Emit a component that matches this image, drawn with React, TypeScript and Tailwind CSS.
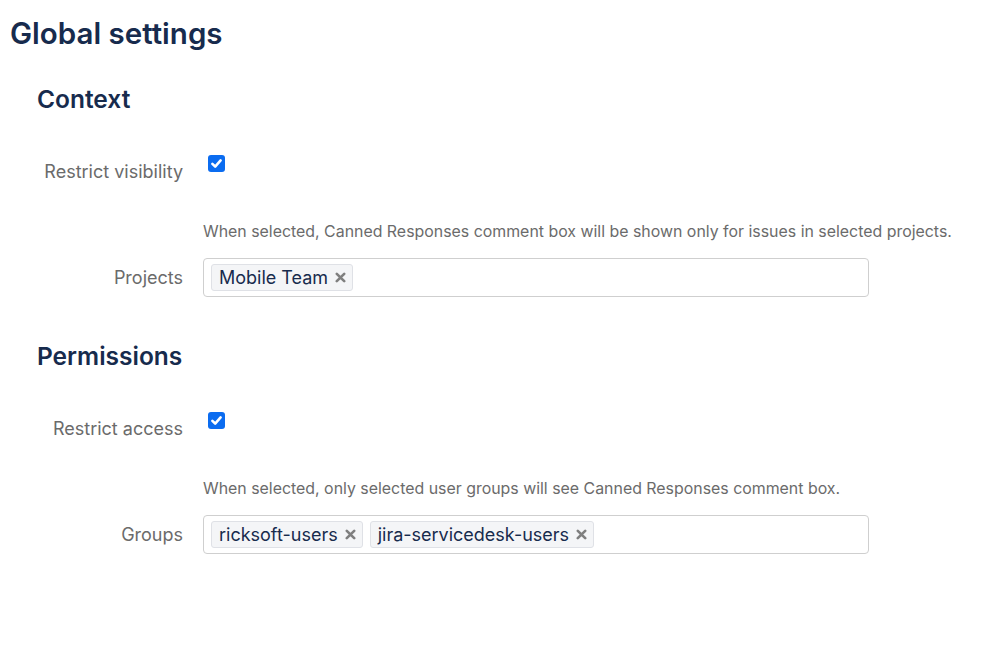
import type { ReactNode } from 'react';

const font = { fontFamily: 'Inter, "Liberation Sans", Arial, sans-serif' };

const Checkbox = () => (
  <div className="ml-[5px] flex h-[17px] w-[17px] items-center justify-center rounded-[3px] bg-[#0b6cf0]">
    <svg width="13" height="13" viewBox="0 0 12 12" fill="none">
      <path d="M2.2 6.3L4.8 8.8L9.8 3.2" stroke="white" strokeWidth="2.4" strokeLinecap="round" strokeLinejoin="round" />
    </svg>
  </div>
);

const Tag = ({ label }: { label: string }) => (
  <div className="flex h-[27px] items-center gap-[7px] rounded-[3px] border border-[#dfe1e6] bg-[#f4f5f7] pl-[7px] pr-[6px]">
    <span className="text-[18px] leading-none text-[#172b4d]">{label}</span>
    <svg width="11" height="11" viewBox="0 0 11 11">
      <path d="M1.8 1.8L9.2 9.2M9.2 1.8L1.8 9.2" stroke="#7f7f7f" strokeWidth="2.6" strokeLinecap="round" />
    </svg>
  </div>
);

const Row = ({ label, children, center }: { label: string; children: ReactNode; center?: boolean }) => (
  <div className={`flex ${center ? 'items-center' : 'items-start'} gap-[20px]`}>
    <div className={`w-[146px] text-right text-[18px] leading-[22px] text-[#6b6b6b] ${center ? '' : 'pt-[6px]'}`}>
      {label}
    </div>
    {children}
  </div>
);

const TagInput = ({ tags }: { tags: string[] }) => (
  <div className="flex h-[39px] w-[666px] items-center gap-[7px] rounded-[4px] border border-[#cfcfcf] px-[7px]">
    {tags.map((t) => (
      <Tag key={t} label={t} />
    ))}
  </div>
);

const Help = ({ children }: { children: ReactNode }) => (
  <div className="ml-[166px] text-[15.9px] leading-[22px] text-[#6b6b6b]">{children}</div>
);

export default function App() {
  return (
    <div className="min-h-[649px] w-[1000px] bg-white pl-[10px] pt-[13px]" style={font}>
      <h1 className="text-[29.5px] font-semibold leading-[40px] text-[#172b4d]">Global settings</h1>
      <div className="pl-[27px]">
        <h2 className="mt-[30px] text-[24.5px] font-semibold leading-[32px] text-[#172b4d]">Context</h2>
        <div className="mt-[40px]">
          <Row label="Restrict visibility">
            <Checkbox />
          </Row>
        </div>
        <div className="mt-[38px]">
          <Help>When selected, Canned Responses comment box will be shown only for issues in selected projects.</Help>
        </div>
        <div className="mt-[15px]">
          <Row label="Projects" center>
            <TagInput tags={['Mobile Team']} />
          </Row>
        </div>

        <h2 className="mt-[43px] text-[24.5px] font-semibold leading-[32px] text-[#172b4d]">Permissions</h2>
        <div className="mt-[40px]">
          <Row label="Restrict access">
            <Checkbox />
          </Row>
        </div>
        <div className="mt-[38px]">
          <Help>When selected, only selected user groups will see Canned Responses comment box.</Help>
        </div>
        <div className="mt-[15px]">
          <Row label="Groups" center>
            <TagInput tags={['ricksoft-users', 'jira-servicedesk-users']} />
          </Row>
        </div>
      </div>
    </div>
  );
}
